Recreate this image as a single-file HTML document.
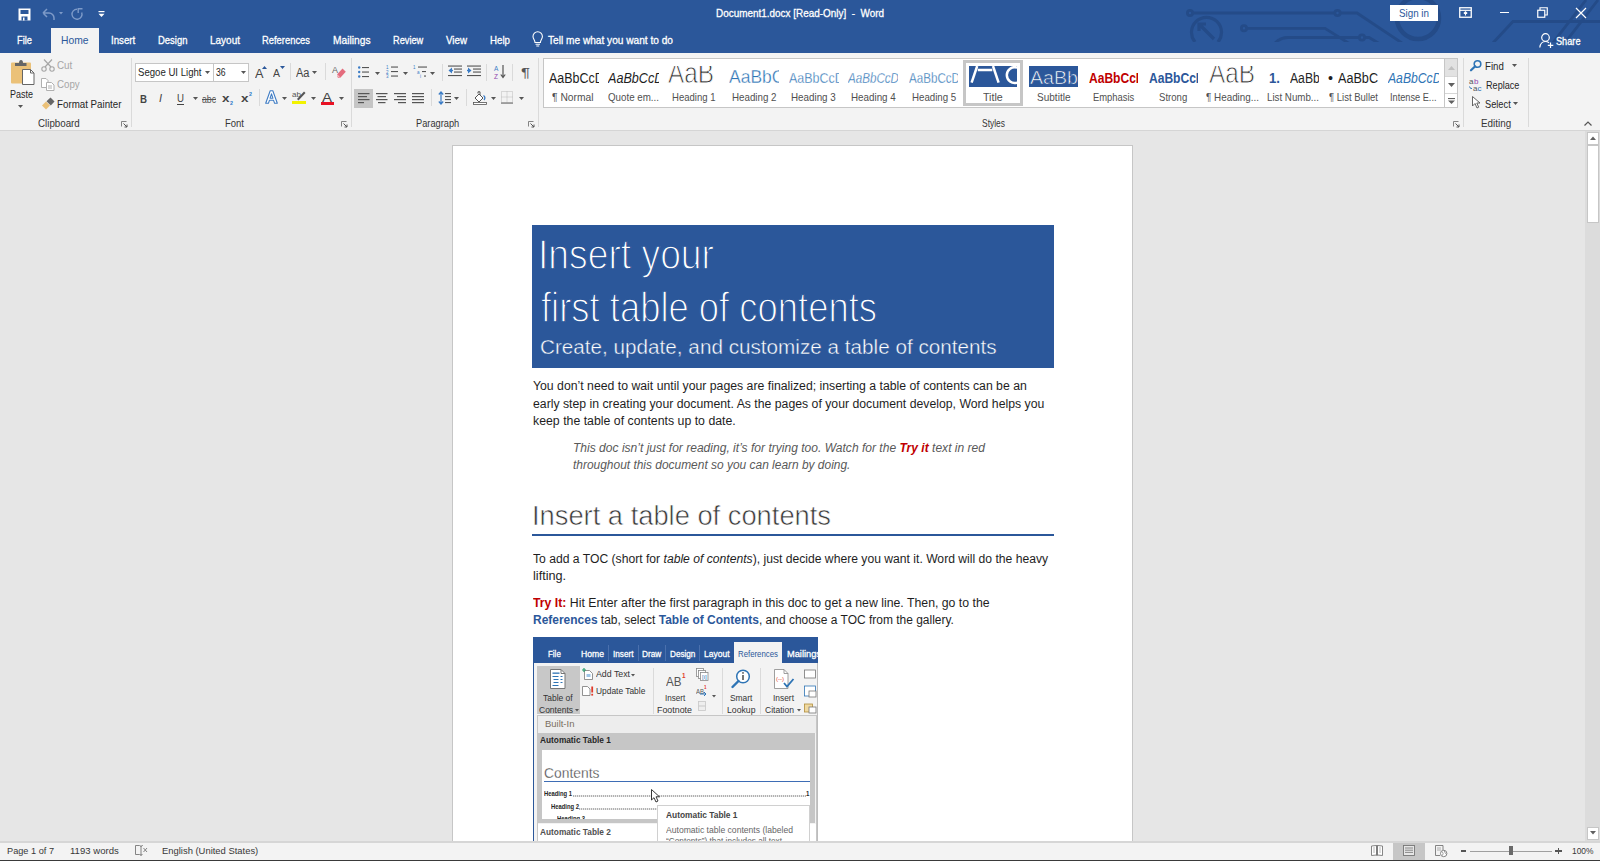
<!DOCTYPE html>
<html><head><meta charset="utf-8"><title>Document1.docx [Read-Only] - Word</title>
<style>
html,body{margin:0;padding:0;}
body{width:1600px;height:861px;overflow:hidden;position:relative;background:#E6E6E6;font-family:"Liberation Sans",sans-serif;}
.a{position:absolute;}
.t{position:absolute;white-space:nowrap;transform-origin:0 0;}
svg.a{overflow:visible;}
</style></head><body>
<div class="a" style="left:0px;top:0px;width:1600px;height:53px;background:#2B579A;"></div>
<svg class="a" style="left:0px;top:0px;" width="1600" height="53" viewBox="0 0 1600 53">
<defs><clipPath id="dc"><rect x="0" y="0" width="1600" height="42"></rect></clipPath></defs>
<g clip-path="url(#dc)" fill="none" stroke="#244B88" stroke-width="2.8">
<circle cx="1190" cy="13" r="2.6"></circle>
<path d="M1193 13 H1335 M1340 13 H1357 L1405 45"></path>
<circle cx="1337.5" cy="13" r="2.6"></circle>
<circle cx="1244" cy="28.3" r="2.6"></circle>
<path d="M1247 28.3 H1325 L1350 44"></path>
<path d="M1274 44 Q1280 37.5 1288 37.5 H1359 M1365 37.5 H1369 L1380 44"></path>
<circle cx="1362" cy="37.5" r="2.6"></circle>
<path d="M1195 42 A15 15 0 1 1 1218 42" stroke-width="3.2"></path>
<path d="M1214 39 L1200 25 M1199 31 V24 H1206" stroke-width="3.2"></path>
<circle cx="1418" cy="18" r="21" stroke-width="4.5"></circle>
<path d="M1492 44 L1513 21.5 H1600"></path>
<path d="M1552 44 L1586 0 M1564 44 L1598 0"></path>
</g></svg>
<svg class="a" style="left:18px;top:8px;" width="13" height="13" viewBox="0 0 13 13"><path d="M0.5 0.5 H12.5 V12.5 H0.5 Z" fill="#fff"></path>
<rect x="2.5" y="2" width="8" height="4" fill="#2B579A"></rect>
<rect x="3.5" y="8.5" width="6" height="4" fill="#2B579A"></rect>
<rect x="5" y="9.5" width="1.5" height="3" fill="#fff"></rect></svg>
<svg class="a" style="left:41px;top:7px;" width="24" height="14" viewBox="0 0 24 14"><path d="M2 6 L6 2 M2 6 L6 10 M2 6 H8 A5 5 0 0 1 13 11 V13" fill="none" stroke="#7D9AC8" stroke-width="1.5"></path>
<path d="M18 5 L22 5 L20 7.5 Z" fill="#7D9AC8"></path></svg>
<svg class="a" style="left:71px;top:7px;" width="13" height="13" viewBox="0 0 13 13"><path d="M6 2.2 A5 5 0 1 0 10.7 5.5" fill="none" stroke="#7D9AC8" stroke-width="1.4"></path><path d="M7.2 6 V1.8 H11.5" fill="none" stroke="#7D9AC8" stroke-width="1.4"></path></svg>
<svg class="a" style="left:98px;top:11px;" width="7" height="7" viewBox="0 0 7 7"><rect x="0.5" y="0" width="6" height="1.2" fill="#fff"></rect><path d="M0.5 2.8 H6.5 L3.5 6 Z" fill="#fff"></path></svg>
<div class="t" style="left: 716px; top: 8.45px; font-size: 11px; line-height: 11px; color: rgb(255, 255, 255); -webkit-text-stroke: 0.3px rgb(255, 255, 255); transform: scaleX(0.901938);">Document1.docx [Read-Only]&nbsp;&nbsp;-&nbsp;&nbsp;Word</div>
<div class="a" style="left:1390px;top:5px;width:48px;height:16px;background:#FFFFFF;"></div>
<div class="t" style="left: 1399px; top: 8.45px; font-size: 11px; line-height: 11px; color: rgb(43, 87, 154); transform: scaleX(0.891779);">Sign in</div>
<svg class="a" style="left:1459px;top:7px;" width="14" height="12" viewBox="0 0 14 12"><rect x="0.75" y="0.75" width="11.5" height="9.5" fill="none" stroke="#fff" stroke-width="1.3"></rect><path d="M1 3.3 H12" stroke="#fff" stroke-width="1.2"></path><path d="M6.5 8.5 V5 M4.8 6.5 L6.5 4.8 L8.2 6.5" fill="none" stroke="#fff" stroke-width="1.1"></path></svg>
<div class="a" style="left:1500px;top:12px;width:9px;height:1.3px;background:#FFFFFF;"></div>
<svg class="a" style="left:1537px;top:7px;" width="12" height="12" viewBox="0 0 12 12"><rect x="0.75" y="3.25" width="7" height="7" fill="none" stroke="#fff" stroke-width="1.2"></rect><path d="M3 3 V0.75 H10.25 V8 H8" fill="none" stroke="#fff" stroke-width="1.2"></path></svg>
<svg class="a" style="left:1575px;top:7px;" width="12" height="12" viewBox="0 0 12 12"><path d="M1 1 L11 11 M11 1 L1 11" stroke="#fff" stroke-width="1.2"></path></svg>
<div class="a" style="left:51px;top:28px;width:48px;height:26px;background:#F3F3F3;"></div>
<div class="t" style="left: 17px; top: 35.25px; font-size: 11px; line-height: 11px; color: rgb(255, 255, 255); -webkit-text-stroke: 0.3px rgb(255, 255, 255); transform: scaleX(0.845815);">File</div>
<div class="t" style="left: 110.7px; top: 35.25px; font-size: 11px; line-height: 11px; color: rgb(255, 255, 255); -webkit-text-stroke: 0.3px rgb(255, 255, 255); transform: scaleX(0.883135);">Insert</div>
<div class="t" style="left: 157.6px; top: 35.25px; font-size: 11px; line-height: 11px; color: rgb(255, 255, 255); -webkit-text-stroke: 0.3px rgb(255, 255, 255); transform: scaleX(0.858394);">Design</div>
<div class="t" style="left: 210px; top: 35.25px; font-size: 11px; line-height: 11px; color: rgb(255, 255, 255); -webkit-text-stroke: 0.3px rgb(255, 255, 255); transform: scaleX(0.908231);">Layout</div>
<div class="t" style="left: 262px; top: 35.25px; font-size: 11px; line-height: 11px; color: rgb(255, 255, 255); -webkit-text-stroke: 0.3px rgb(255, 255, 255); transform: scaleX(0.853096);">References</div>
<div class="t" style="left: 332.5px; top: 35.25px; font-size: 11px; line-height: 11px; color: rgb(255, 255, 255); -webkit-text-stroke: 0.3px rgb(255, 255, 255); transform: scaleX(0.929152);">Mailings</div>
<div class="t" style="left: 392.75px; top: 35.25px; font-size: 11px; line-height: 11px; color: rgb(255, 255, 255); -webkit-text-stroke: 0.3px rgb(255, 255, 255); transform: scaleX(0.838458);">Review</div>
<div class="t" style="left: 445.6px; top: 35.25px; font-size: 11px; line-height: 11px; color: rgb(255, 255, 255); -webkit-text-stroke: 0.3px rgb(255, 255, 255); transform: scaleX(0.887715);">View</div>
<div class="t" style="left: 489.7px; top: 35.25px; font-size: 11px; line-height: 11px; color: rgb(255, 255, 255); -webkit-text-stroke: 0.3px rgb(255, 255, 255); transform: scaleX(0.883978);">Help</div>
<div class="t" style="left: 547.8px; top: 35.25px; font-size: 11px; line-height: 11px; color: rgb(255, 255, 255); -webkit-text-stroke: 0.3px rgb(255, 255, 255); transform: scaleX(0.92081);">Tell me what you want to do</div>
<div class="t" style="left: 61px; top: 35.25px; font-size: 11px; line-height: 11px; color: rgb(43, 87, 154); transform: scaleX(0.937167);">Home</div>
<svg class="a" style="left:532px;top:32px;" width="12" height="15" viewBox="0 0 12 15"><path d="M3 10.5 C3 8 1 7 1 4.5 A4.7 4.7 0 0 1 10.4 4.5 C10.4 7 8.4 8 8.4 10.5 Z" fill="none" stroke="#fff" stroke-width="1.1"></path><path d="M3.5 12.3 H8 M4.3 14 H7.2" stroke="#fff" stroke-width="1.1"></path></svg>
<svg class="a" style="left:1539px;top:33px;" width="15" height="15" viewBox="0 0 15 15"><circle cx="6.5" cy="4.5" r="3.8" fill="none" stroke="#fff" stroke-width="1.2"></circle><path d="M0.8 14.5 C1.3 10.5 3.5 8.5 6.5 8.5 C8 8.5 9 9 10 9.8" fill="none" stroke="#fff" stroke-width="1.2"></path><path d="M11.5 9.5 V15 M8.8 12.3 H14.3" stroke="#fff" stroke-width="1.2"></path></svg>
<div class="t" style="left: 1556px; top: 36.45px; font-size: 11px; line-height: 11px; color: rgb(255, 255, 255); -webkit-text-stroke: 0.3px rgb(255, 255, 255); transform: scaleX(0.834486);">Share</div>
<div class="a" style="left:0px;top:53px;width:1600px;height:78px;background:#F3F3F3;"></div>
<div class="a" style="left:0px;top:130px;width:1600px;height:1px;background:#D5D5D5;"></div>
<div class="a" style="left:131px;top:58px;width:1px;height:69px;background:#DADADA;"></div>
<div class="a" style="left:350.5px;top:58px;width:1px;height:69px;background:#DADADA;"></div>
<div class="a" style="left:537.5px;top:58px;width:1px;height:69px;background:#DADADA;"></div>
<div class="a" style="left:1463px;top:58px;width:1px;height:69px;background:#DADADA;"></div>
<div class="a" style="left:1528px;top:58px;width:1px;height:69px;background:#DADADA;"></div>
<svg class="a" style="left:10px;top:59px;" width="26" height="28" viewBox="0 0 26 28">
<rect x="1" y="3.5" width="20" height="21" rx="1" fill="#EBC178"></rect>
<path d="M5 7 V4 H9 Q9 1 11 1 Q13 1 13 4 H16.5 V7 Z" fill="#666"></path>
<path d="M12.5 10.5 H20.5 L24 14 V25.5 H12.5 Z" fill="#fff" stroke="#666" stroke-width="1"></path>
<path d="M20.5 10.5 V14 H24" fill="none" stroke="#666" stroke-width="1"></path></svg>
<div class="t" style="left: 9.6px; top: 89.15px; font-size: 11px; line-height: 11px; color: rgb(38, 38, 38); transform: scaleX(0.817324);">Paste</div>
<svg class="a" style="left:18px;top:105px;" width="5" height="4" viewBox="0 0 5 4"><path d="M0 0 H5 L2.5 3 Z" fill="#555"></path></svg>
<svg class="a" style="left:41px;top:59px;" width="14" height="13" viewBox="0 0 14 13"><path d="M3 0.5 L10 8 M11 0.5 L4 8" stroke="#A6A6A6" stroke-width="1.2" fill="none"></path>
<circle cx="3" cy="10" r="2.2" fill="none" stroke="#A6A6A6" stroke-width="1.1"></circle><circle cx="11" cy="10" r="2.2" fill="none" stroke="#A6A6A6" stroke-width="1.1"></circle></svg>
<div class="t" style="left: 57px; top: 60.45px; font-size: 11px; line-height: 11px; color: rgb(166, 166, 166); transform: scaleX(0.893431);">Cut</div>
<svg class="a" style="left:41px;top:78px;" width="14" height="13" viewBox="0 0 14 13"><path d="M0.5 0.5 H5 L7 2.5 V9.5 H0.5 Z" fill="#fff" stroke="#B0B0B0"></path>
<path d="M5.5 4.5 H10.5 L13 7 V12.5 H5.5 Z" fill="#fff" stroke="#B0B0B0"></path>
<path d="M7 8 H11 M7 10 H11" stroke="#B0B0B0"></path></svg>
<div class="t" style="left: 57px; top: 79.45px; font-size: 11px; line-height: 11px; color: rgb(166, 166, 166); transform: scaleX(0.883698);">Copy</div>
<svg class="a" style="left:41px;top:97px;" width="14" height="13" viewBox="0 0 14 13"><path d="M1 8.5 L5 4.5 L9 8.5 L5 12.5 Z" fill="#EBC178"></path>
<path d="M5.5 4.2 L9.5 0.5 L13.5 4.5 L9.8 8.5 Z" fill="#666"></path></svg>
<div class="t" style="left: 57px; top: 99.15px; font-size: 11px; line-height: 11px; color: rgb(38, 38, 38); transform: scaleX(0.886598);">Format Painter</div>
<div class="t" style="left: 37.9px; top: 118.45px; font-size: 11px; line-height: 11px; color: rgb(54, 54, 54); transform: scaleX(0.887591);">Clipboard</div>
<svg class="a" style="left:121px;top:121px;" width="7" height="6" viewBox="0 0 7 6"><path d="M0.5 5.5 V0.5 H5.5" fill="none" stroke="#777" stroke-width="0.9"></path><path d="M2.5 2.5 L6 6 M6 3.5 V6 H3.5" fill="none" stroke="#555" stroke-width="1"></path></svg>
<svg class="a" style="left:340.5px;top:121px;" width="7" height="6" viewBox="0 0 7 6"><path d="M0.5 5.5 V0.5 H5.5" fill="none" stroke="#777" stroke-width="0.9"></path><path d="M2.5 2.5 L6 6 M6 3.5 V6 H3.5" fill="none" stroke="#555" stroke-width="1"></path></svg>
<svg class="a" style="left:527.5px;top:121px;" width="7" height="6" viewBox="0 0 7 6"><path d="M0.5 5.5 V0.5 H5.5" fill="none" stroke="#777" stroke-width="0.9"></path><path d="M2.5 2.5 L6 6 M6 3.5 V6 H3.5" fill="none" stroke="#555" stroke-width="1"></path></svg>
<svg class="a" style="left:1452.5px;top:121px;" width="7" height="6" viewBox="0 0 7 6"><path d="M0.5 5.5 V0.5 H5.5" fill="none" stroke="#777" stroke-width="0.9"></path><path d="M2.5 2.5 L6 6 M6 3.5 V6 H3.5" fill="none" stroke="#555" stroke-width="1"></path></svg>
<div class="a" style="left:135px;top:62.5px;width:114px;height:19px;background:#FFFFFF;border:1px solid #C6C6C6;box-sizing:border-box;"></div>
<div class="a" style="left:213px;top:63px;width:1px;height:18px;background:#C6C6C6;"></div>
<div class="t" style="left: 137.5px; top: 67.32px; font-size: 11.5px; line-height: 11.5px; color: rgb(38, 38, 38); transform: scaleX(0.834497);">Segoe UI Light</div>
<svg class="a" style="left:204.5px;top:71px;" width="5" height="3" viewBox="0 0 5 3"><path d="M0 0 H5 L2.5 3 Z" fill="#555"></path></svg>
<div class="t" style="left: 216px; top: 67.32px; font-size: 11.5px; line-height: 11.5px; color: rgb(38, 38, 38); transform: scaleX(0.750183);">36</div>
<svg class="a" style="left:240.5px;top:71px;" width="5" height="3" viewBox="0 0 5 3"><path d="M0 0 H5 L2.5 3 Z" fill="#555"></path></svg>
<div class="t" style="left: 254.5px; top: 66.75px; font-size: 13px; line-height: 13px; color: rgb(68, 68, 68); transform: scaleX(0.98018);">A</div>
<svg class="a" style="left:262px;top:66px;" width="5" height="3" viewBox="0 0 5 3"><path d="M0 3 H5 L2.5 0 Z" fill="#2B579A"></path></svg>
<div class="t" style="left: 273px; top: 69.3px; font-size: 10px; line-height: 10px; color: rgb(68, 68, 68); transform: scaleX(1.04918);">A</div>
<svg class="a" style="left:280px;top:66px;" width="5" height="3" viewBox="0 0 5 3"><path d="M0 0 H5 L2.5 3 Z" fill="#2B579A"></path></svg>
<div class="a" style="left:289.5px;top:63px;width:1px;height:17px;background:#DADADA;"></div>
<div class="t" style="left: 295.7px; top: 66.6px; font-size: 12px; line-height: 12px; color: rgb(68, 68, 68); transform: scaleX(0.919149);">Aa</div>
<svg class="a" style="left:312px;top:71px;" width="5" height="3" viewBox="0 0 5 3"><path d="M0 0 H5 L2.5 3 Z" fill="#555"></path></svg>
<div class="a" style="left:324.5px;top:63px;width:1px;height:17px;background:#DADADA;"></div>
<svg class="a" style="left:332px;top:65px;" width="14" height="13" viewBox="0 0 14 13"><text x="0" y="8" font-size="9" font-family="Liberation Sans" fill="#666">A</text>
<path d="M5 9.5 L10.5 3.5 L13.8 6.8 L8.3 12.8 H5.8 Z" fill="#E46C7D"></path><path d="M5 9.5 L7.5 12.3" stroke="#fff" stroke-width="0.7"></path></svg>
<div class="t" style="left: 140px; top: 93.88px; font-size: 10.5px; line-height: 10.5px; color: rgb(68, 68, 68); font-weight: bold; transform: scaleX(0.921811);">B</div>
<div class="t" style="left:159.00px;top:93.45px;font-size:11px;line-height:11px;color:#444;font-style:italic;font-family:" liberation="" serif",serif;--w:6;"="">I</div>
<div class="t" style="left: 176.5px; top: 93.45px; font-size: 11px; line-height: 11px; color: rgb(68, 68, 68); transform: scaleX(0.880157);">U</div>
<div class="a" style="left:176.5px;top:103.5px;width:7.5px;height:1px;background:#444;"></div>
<svg class="a" style="left:192.5px;top:97px;" width="5" height="3" viewBox="0 0 5 3"><path d="M0 0 H5 L2.5 3 Z" fill="#555"></path></svg>
<div class="t" style="left: 202px; top: 93.88px; font-size: 10.5px; line-height: 10.5px; color: rgb(85, 85, 85); transform: scaleX(0.826568);">abc</div>
<div class="a" style="left:202px;top:98.5px;width:14px;height:1px;background:#555;"></div>
<div class="t" style="left: 222px; top: 93.45px; font-size: 11px; line-height: 11px; color: rgb(68, 68, 68); font-weight: bold; transform: scaleX(1.22449);">x</div>
<div class="t" style="left: 230px; top: 100.2px; font-size: 6px; line-height: 6px; color: rgb(43, 121, 201); font-weight: bold; transform: scaleX(0.897196);">2</div>
<div class="t" style="left: 240.7px; top: 93.45px; font-size: 11px; line-height: 11px; color: rgb(68, 68, 68); font-weight: bold; transform: scaleX(1.22449);">x</div>
<div class="t" style="left: 248.5px; top: 91.2px; font-size: 6px; line-height: 6px; color: rgb(43, 121, 201); font-weight: bold; transform: scaleX(0.897196);">2</div>
<div class="a" style="left:258.5px;top:89px;width:1px;height:17px;background:#DADADA;"></div>
<svg class="a" style="left:265px;top:90px;" width="13" height="14" viewBox="0 0 13 14"><path d="M0.7 13.3 L5.2 0.7 H7.8 L12.3 13.3 H9.6 L8.6 10.3 H4.4 L3.4 13.3 Z M5.1 8.2 H7.9 L6.5 3.8 Z" fill="#fff" stroke="#3F7CC4" stroke-width="1.1" stroke-linejoin="round"></path></svg>
<svg class="a" style="left:282px;top:97px;" width="5" height="3" viewBox="0 0 5 3"><path d="M0 0 H5 L2.5 3 Z" fill="#555"></path></svg>
<svg class="a" style="left:292px;top:89px;" width="15" height="15" viewBox="0 0 15 15"><text x="0" y="8" font-size="8" font-family="Liberation Sans" fill="#555">ab</text>
<path d="M5 10 L12 2.5 L13.5 4 L6.5 11.5 Z" fill="#555"></path>
<rect x="0" y="12" width="14" height="3" fill="#F2F200"></rect></svg>
<svg class="a" style="left:311px;top:97px;" width="5" height="3" viewBox="0 0 5 3"><path d="M0 0 H5 L2.5 3 Z" fill="#555"></path></svg>
<div class="t" style="left: 322px; top: 91.6px; font-size: 12px; line-height: 12px; color: rgb(68, 68, 68); transform: scaleX(1.24756);">A</div>
<div class="a" style="left:321px;top:101.5px;width:13px;height:3px;background:#E81123;"></div>
<svg class="a" style="left:339px;top:97px;" width="5" height="3" viewBox="0 0 5 3"><path d="M0 0 H5 L2.5 3 Z" fill="#555"></path></svg>
<div class="t" style="left: 225px; top: 118.45px; font-size: 11px; line-height: 11px; color: rgb(54, 54, 54); transform: scaleX(0.863023);">Font</div>
<svg class="a" style="left:357.5px;top:65.5px;" width="11" height="12" viewBox="0 0 11 12"><circle cx="1.2" cy="1.5" r="1.2" fill="#3B7CC6"></circle><circle cx="1.2" cy="6" r="1.2" fill="#3B7CC6"></circle><circle cx="1.2" cy="10.5" r="1.2" fill="#3B7CC6"></circle><rect x="4" y="1" width="7" height="1.1" fill="#555"></rect><rect x="4" y="5.5" width="7" height="1.1" fill="#555"></rect><rect x="4" y="10" width="7" height="1.1" fill="#555"></rect></svg>
<svg class="a" style="left:375px;top:72px;" width="5" height="3" viewBox="0 0 5 3"><path d="M0 0 H5 L2.5 3 Z" fill="#555"></path></svg>
<svg class="a" style="left:385.5px;top:65px;" width="12" height="13" viewBox="0 0 12 13"><text x="0" y="4" font-size="4.5" fill="#3B7CC6" font-family="Liberation Sans">1</text><text x="0" y="8.5" font-size="4.5" fill="#3B7CC6" font-family="Liberation Sans">2</text><text x="0" y="13" font-size="4.5" fill="#3B7CC6" font-family="Liberation Sans">3</text><rect x="5" y="1.5" width="7" height="1.1" fill="#555"></rect><rect x="5" y="6" width="7" height="1.1" fill="#555"></rect><rect x="5" y="10.5" width="7" height="1.1" fill="#555"></rect></svg>
<svg class="a" style="left:403px;top:72px;" width="5" height="3" viewBox="0 0 5 3"><path d="M0 0 H5 L2.5 3 Z" fill="#555"></path></svg>
<svg class="a" style="left:413px;top:65px;" width="14" height="13" viewBox="0 0 14 13"><text x="0" y="4" font-size="4.5" fill="#3B7CC6" font-family="Liberation Sans">1</text><text x="4" y="8.5" font-size="4.5" fill="#3B7CC6" font-family="Liberation Sans">a</text><text x="7" y="13" font-size="4.5" fill="#3B7CC6" font-family="Liberation Sans">i</text><rect x="5" y="1.5" width="9" height="1.1" fill="#555"></rect><rect x="9" y="6" width="4" height="1.1" fill="#555"></rect><rect x="11" y="10.5" width="2" height="1.1" fill="#555"></rect></svg>
<svg class="a" style="left:430px;top:72px;" width="5" height="3" viewBox="0 0 5 3"><path d="M0 0 H5 L2.5 3 Z" fill="#555"></path></svg>
<div class="a" style="left:442px;top:64px;width:1px;height:17px;background:#DADADA;"></div>
<svg class="a" style="left:448px;top:65px;" width="14" height="12" viewBox="0 0 14 12"><rect x="0" y="0.5" width="14" height="1.1" fill="#555"></rect><rect x="6" y="3.5" width="8" height="1.1" fill="#555"></rect><rect x="6" y="6.5" width="8" height="1.1" fill="#555"></rect><rect x="0" y="10" width="14" height="1.1" fill="#555"></rect><path d="M0.5 5.5 L4 2.5 V8.5 Z" fill="#3B7CC6"></path><rect x="2" y="4.8" width="3" height="1.4" fill="#3B7CC6"></rect></svg>
<svg class="a" style="left:467px;top:65px;" width="14" height="12" viewBox="0 0 14 12"><rect x="0" y="0.5" width="14" height="1.1" fill="#555"></rect><rect x="6" y="3.5" width="8" height="1.1" fill="#555"></rect><rect x="6" y="6.5" width="8" height="1.1" fill="#555"></rect><rect x="0" y="10" width="14" height="1.1" fill="#555"></rect><path d="M4.5 5.5 L1 2.5 V8.5 Z" fill="#3B7CC6"></path><rect x="0" y="4.8" width="3" height="1.4" fill="#3B7CC6"></rect></svg>
<div class="a" style="left:486px;top:64px;width:1px;height:17px;background:#DADADA;"></div>
<svg class="a" style="left:494px;top:65px;" width="12" height="14" viewBox="0 0 12 14"><text x="0" y="6" font-size="6.5" fill="#3B7CC6" font-family="Liberation Sans">A</text><text x="0" y="13.5" font-size="6.5" fill="#8E44AD" font-family="Liberation Sans">Z</text><path d="M9 0 V12 M6.8 9.5 L9 12.5 L11.2 9.5" fill="none" stroke="#555" stroke-width="1.2"></path></svg>
<div class="a" style="left:512px;top:64px;width:1px;height:17px;background:#DADADA;"></div>
<div class="t" style="left: 520.6px; top: 67.17px; font-size: 12.5px; line-height: 12.5px; color: rgb(85, 85, 85); transform: scaleX(1.33953);">¶</div>
<div class="a" style="left:354px;top:88.5px;width:18.5px;height:19px;background:#C5C5C5;"></div>
<svg class="a" style="left:357.5px;top:93px;" width="12" height="10" viewBox="0 0 12 10"><rect x="0" y="0" width="11.5" height="1.2" fill="#555"></rect><rect x="0" y="3" width="9" height="1.2" fill="#555"></rect><rect x="0" y="6" width="11.5" height="1.2" fill="#555"></rect><rect x="0" y="9" width="6" height="1.2" fill="#555"></rect></svg>
<svg class="a" style="left:375.5px;top:93px;" width="12" height="10" viewBox="0 0 12 10"><rect x="0" y="0" width="11.5" height="1.2" fill="#555"></rect><rect x="1.5" y="3" width="8.5" height="1.2" fill="#555"></rect><rect x="0" y="6" width="11.5" height="1.2" fill="#555"></rect><rect x="2" y="9" width="7.5" height="1.2" fill="#555"></rect></svg>
<svg class="a" style="left:394px;top:93px;" width="12" height="10" viewBox="0 0 12 10"><rect x="0" y="0" width="12" height="1.2" fill="#555"></rect><rect x="3" y="3" width="9" height="1.2" fill="#555"></rect><rect x="0" y="6" width="12" height="1.2" fill="#555"></rect><rect x="4" y="9" width="8" height="1.2" fill="#555"></rect></svg>
<svg class="a" style="left:412px;top:93px;" width="12" height="10" viewBox="0 0 12 10"><rect x="0" y="0" width="12" height="1.2" fill="#555"></rect><rect x="0" y="3" width="12" height="1.2" fill="#555"></rect><rect x="0" y="6" width="12" height="1.2" fill="#555"></rect><rect x="0" y="9" width="12" height="1.2" fill="#555"></rect></svg>
<div class="a" style="left:431px;top:89px;width:1px;height:17px;background:#DADADA;"></div>
<svg class="a" style="left:437.5px;top:90.5px;" width="13" height="14" viewBox="0 0 13 14"><path d="M3 1 V13 M0.8 3.5 L3 1 L5.2 3.5 M0.8 10.5 L3 13 L5.2 10.5" fill="none" stroke="#3B7CC6" stroke-width="1.2"></path><rect x="7" y="2" width="6" height="1.1" fill="#555"></rect><rect x="7" y="5" width="6" height="1.1" fill="#555"></rect><rect x="7" y="8" width="6" height="1.1" fill="#555"></rect><rect x="7" y="11" width="6" height="1.1" fill="#555"></rect></svg>
<svg class="a" style="left:454px;top:97px;" width="5" height="3" viewBox="0 0 5 3"><path d="M0 0 H5 L2.5 3 Z" fill="#555"></path></svg>
<div class="a" style="left:466px;top:89px;width:1px;height:17px;background:#DADADA;"></div>
<svg class="a" style="left:472.5px;top:90.5px;" width="14" height="14" viewBox="0 0 14 14"><path d="M2 7 L6 3 L10 7 L6 11 Z" fill="#fff" stroke="#555" stroke-width="1"></path><path d="M5 2.5 V0.8 H7 V4" fill="none" stroke="#555"></path><path d="M10.5 4.5 Q13 6.5 11 9" fill="none" stroke="#3B7CC6" stroke-width="1.3"></path><rect x="0.5" y="11.5" width="13" height="2" fill="#fff" stroke="#555" stroke-width="0.8"></rect></svg>
<svg class="a" style="left:490.5px;top:97px;" width="5" height="3" viewBox="0 0 5 3"><path d="M0 0 H5 L2.5 3 Z" fill="#555"></path></svg>
<svg class="a" style="left:501px;top:90.5px;" width="12" height="13" viewBox="0 0 12 13"><rect x="0.5" y="0.5" width="11" height="11" fill="none" stroke="#BBB" stroke-dasharray="1 1"></rect><path d="M6 0.5 V11.5 M0.5 6 H11.5" stroke="#BBB" stroke-dasharray="1 1"></path><rect x="0" y="11.5" width="12" height="1.2" fill="#777"></rect></svg>
<svg class="a" style="left:519px;top:97px;" width="5" height="3" viewBox="0 0 5 3"><path d="M0 0 H5 L2.5 3 Z" fill="#555"></path></svg>
<div class="t" style="left: 415.6px; top: 118.45px; font-size: 11px; line-height: 11px; color: rgb(54, 54, 54); transform: scaleX(0.840876);">Paragraph</div>
<div class="a" style="left:542.5px;top:58.3px;width:915px;height:50px;background:#FFFFFF;border:1px solid #C6C6C6;box-sizing:border-box;"></div>
<div class="a" style="left:1444px;top:59px;width:1px;height:49px;background:#C6C6C6;"></div>
<div class="a" style="left:1445px;top:59.3px;width:12px;height:16.7px;background:#E2E2E2;"></div>
<div class="a" style="left:1445px;top:76px;width:12px;height:1px;background:#D6D6D6;"></div>
<div class="a" style="left:1445px;top:92.75px;width:12px;height:1px;background:#D6D6D6;"></div>
<svg class="a" style="left:1447.5px;top:66px;" width="7" height="4" viewBox="0 0 7 4"><path d="M0 4 H7 L3.5 0 Z" fill="#C0C0C0"></path></svg>
<svg class="a" style="left:1447.5px;top:83px;" width="7" height="4" viewBox="0 0 7 4"><path d="M0 0 H7 L3.5 4 Z" fill="#606060"></path></svg>
<svg class="a" style="left:1447.5px;top:97.5px;" width="7" height="6" viewBox="0 0 7 6"><rect x="0" y="0" width="7" height="1.1" fill="#606060"></rect><path d="M0 2.5 H7 L3.5 6 Z" fill="#606060"></path></svg>
<div class="a" style="left:963.3px;top:60.25px;width:59.7px;height:45.75px;border:3px solid #C6C6C6;box-sizing:border-box;"></div>
<div class="t" style="left: 552px; top: 92.32px; font-size: 10.8px; line-height: 10.8px; color: rgb(80, 80, 80); transform: scaleX(0.951971);">¶ Normal</div>
<div class="t" style="left: 608px; top: 92.32px; font-size: 10.8px; line-height: 10.8px; color: rgb(80, 80, 80); transform: scaleX(0.903905);">Quote em...</div>
<div class="t" style="left: 671.5px; top: 92.32px; font-size: 10.8px; line-height: 10.8px; color: rgb(80, 80, 80); transform: scaleX(0.883529);">Heading 1</div>
<div class="t" style="left: 731.5px; top: 92.32px; font-size: 10.8px; line-height: 10.8px; color: rgb(80, 80, 80); transform: scaleX(0.90384);">Heading 2</div>
<div class="t" style="left: 791px; top: 92.32px; font-size: 10.8px; line-height: 10.8px; color: rgb(80, 80, 80); transform: scaleX(0.908918);">Heading 3</div>
<div class="t" style="left: 851px; top: 92.32px; font-size: 10.8px; line-height: 10.8px; color: rgb(80, 80, 80); transform: scaleX(0.908918);">Heading 4</div>
<div class="t" style="left: 911.5px; top: 92.32px; font-size: 10.8px; line-height: 10.8px; color: rgb(80, 80, 80); transform: scaleX(0.898762);">Heading 5</div>
<div class="t" style="left: 983px; top: 92.32px; font-size: 10.8px; line-height: 10.8px; color: rgb(80, 80, 80); transform: scaleX(0.9875);">Title</div>
<div class="t" style="left: 1036.5px; top: 92.32px; font-size: 10.8px; line-height: 10.8px; color: rgb(80, 80, 80); transform: scaleX(0.930152);">Subtitle</div>
<div class="t" style="left: 1092.75px; top: 92.32px; font-size: 10.8px; line-height: 10.8px; color: rgb(80, 80, 80); transform: scaleX(0.870138);">Emphasis</div>
<div class="t" style="left: 1158.75px; top: 92.32px; font-size: 10.8px; line-height: 10.8px; color: rgb(80, 80, 80); transform: scaleX(0.888016);">Strong</div>
<div class="t" style="left: 1206px; top: 92.32px; font-size: 10.8px; line-height: 10.8px; color: rgb(80, 80, 80); transform: scaleX(0.913301);">¶ Heading...</div>
<div class="t" style="left: 1267px; top: 92.32px; font-size: 10.8px; line-height: 10.8px; color: rgb(80, 80, 80); transform: scaleX(0.902631);">List Numb...</div>
<div class="t" style="left: 1329px; top: 92.32px; font-size: 10.8px; line-height: 10.8px; color: rgb(80, 80, 80); transform: scaleX(0.881146);">¶ List Bullet</div>
<div class="t" style="left: 1390px; top: 92.32px; font-size: 10.8px; line-height: 10.8px; color: rgb(80, 80, 80); transform: scaleX(0.851259);">Intense E...</div>
<div class="a" style="left:549px;top:71.40px;width:49.5px;height:18.2px;overflow:hidden;"><div class="t" style="left:0px;top:0px;font-size:14px;line-height:14px;color:#1E1E1E;transform:scaleX(0.89);">AaBbCcD</div></div>
<div class="a" style="left:607.5px;top:71.40px;width:51px;height:18.2px;overflow:hidden;"><div class="t" style="left:0px;top:0px;font-size:14px;line-height:14px;color:#1E1E1E;transform:scaleX(0.9);font-style:italic;">AaBbCcD</div></div>
<div class="a" style="left:667px;top:66px;width:48.5px;height:22px;overflow:hidden;"><div class="t" style="left:1px;top:-7.05px;font-size:29px;line-height:29px;color:#333;transform:scaleX(0.84);-webkit-text-stroke:0.9px #fff;">AaB</div></div>
<div class="a" style="left:729px;top:67.35px;width:49.5px;height:24.7px;overflow:hidden;"><div class="t" style="left:0px;top:0px;font-size:19px;line-height:19px;color:#2E74B5;transform:scaleX(0.92);-webkit-text-stroke:0.35px #fff;">AaBbC</div></div>
<div class="a" style="left:789px;top:70.97px;width:49.5px;height:18.9px;overflow:hidden;"><div class="t" style="left:0px;top:0px;font-size:14.5px;line-height:14.5px;color:#2E74B5;transform:scaleX(0.86);-webkit-text-stroke:0.3px #fff;">AaBbCcD</div></div>
<div class="a" style="left:848px;top:70.97px;width:50px;height:18.9px;overflow:hidden;"><div class="t" style="left:0px;top:0px;font-size:14.5px;line-height:14.5px;color:#2E74B5;transform:scaleX(0.8);font-style:italic;-webkit-text-stroke:0.3px #fff;">AaBbCcD</div></div>
<div class="a" style="left:908.5px;top:70.97px;width:49px;height:18.9px;overflow:hidden;"><div class="t" style="left:0px;top:0px;font-size:14.5px;line-height:14.5px;color:#2E74B5;transform:scaleX(0.8);-webkit-text-stroke:0.3px #fff;">AaBbCcD</div></div>
<div class="a" style="left:969px;top:65.9px;width:48.3px;height:21.6px;background:#2B579A;"></div>
<svg class="a" style="left:969px;top:65.9px;" width="48.3" height="21.6" viewBox="0 0 48.3 21.6"><defs><clipPath id="tc"><rect x="0" y="0" width="48.3" height="21.6"></rect></clipPath></defs><g clip-path="url(#tc)" fill="none" stroke="#fff" stroke-width="2.5"><path d="M2.6 16.6 L8.2 0"></path><path d="M8.8 3.9 H23.3"></path><path d="M24 0 L29.6 16.6"></path><path d="M48.2 1.6 A7.9 7.9 0 1 0 48.2 16.6"></path></g></svg>
<div class="a" style="left:1029px;top:65.8px;width:48.75px;height:21.45px;background:#2B579A;"></div>
<div class="t" style="left: 1029.5px; top: 68.5px; font-size: 18px; line-height: 18px; color: rgb(255, 255, 255); -webkit-text-stroke: 0.6px rgb(43, 87, 154); transform: scaleX(1.08975);">AaBb</div>
<div class="a" style="left:1089px;top:71.40px;width:49px;height:18.2px;overflow:hidden;"><div class="t" style="left:0px;top:0px;font-size:14px;line-height:14px;color:#C00000;transform:scaleX(0.86);font-weight:bold;">AaBbCcD</div></div>
<div class="a" style="left:1149px;top:71.40px;width:49px;height:18.2px;overflow:hidden;"><div class="t" style="left:0px;top:0px;font-size:14px;line-height:14px;color:#2B579A;transform:scaleX(0.86);font-weight:bold;">AaBbCcD</div></div>
<div class="a" style="left:1208px;top:66px;width:48px;height:22px;overflow:hidden;"><div class="t" style="left:1px;top:-7.05px;font-size:29px;line-height:29px;color:#333;transform:scaleX(0.84);-webkit-text-stroke:0.9px #fff;">AaB</div></div>
<div class="t" style="left: 1269px; top: 71.4px; font-size: 14px; line-height: 14px; color: rgb(43, 87, 154); font-weight: bold; transform: scaleX(0.941176);">1.</div>
<div class="a" style="left:1290px;top:71.40px;width:29px;height:18.2px;overflow:hidden;"><div class="t" style="left:0px;top:0px;font-size:14px;line-height:14px;color:#262626;transform:scaleX(0.87);">AaBbC</div></div>
<div class="t" style="left: 1328px; top: 71.4px; font-size: 14px; line-height: 14px; color: rgb(30, 30, 30); transform: scaleX(1.01911);">•</div>
<div class="t" style="left: 1338px; top: 71.4px; font-size: 14px; line-height: 14px; color: rgb(30, 30, 30); transform: scaleX(0.901726);">AaBbC</div>
<div class="a" style="left:1387.5px;top:71.40px;width:51px;height:18.2px;overflow:hidden;"><div class="t" style="left:0px;top:0px;font-size:14px;line-height:14px;color:#2E74B5;transform:scaleX(0.87);font-style:italic;">AaBbCcD</div></div>
<div class="t" style="left: 982px; top: 118.45px; font-size: 11px; line-height: 11px; color: rgb(54, 54, 54); transform: scaleX(0.767466);">Styles</div>
<svg class="a" style="left:1470px;top:60px;" width="12" height="11" viewBox="0 0 12 11"><circle cx="7.5" cy="4" r="3.3" fill="none" stroke="#2E74B5" stroke-width="1.6"></circle><path d="M5.2 6.3 L1 10.3" stroke="#2E74B5" stroke-width="2.2" stroke-linecap="round"></path></svg>
<div class="t" style="left: 1485px; top: 60.85px; font-size: 11px; line-height: 11px; color: rgb(38, 38, 38); transform: scaleX(0.875912);">Find</div>
<svg class="a" style="left:1512px;top:64px;" width="5" height="3" viewBox="0 0 5 3"><path d="M0 0 H5 L2.5 3 Z" fill="#555"></path></svg>
<svg class="a" style="left:1469px;top:77px;" width="14" height="14" viewBox="0 0 14 14"><text x="0" y="7" font-size="8" font-family="Liberation Sans" fill="#555">a</text><text x="5" y="7" font-size="8" font-family="Liberation Sans" fill="#8E44AD">b</text><text x="4" y="13.5" font-size="8" font-family="Liberation Sans" fill="#555">a</text><text x="8.5" y="13.5" font-size="8" font-family="Liberation Sans" fill="#2E74B5">c</text><path d="M0.5 9.5 Q1 12 3 11.5" fill="none" stroke="#2E74B5" stroke-width="1"></path></svg>
<div class="t" style="left: 1485.6px; top: 79.85px; font-size: 11px; line-height: 11px; color: rgb(38, 38, 38); transform: scaleX(0.827565);">Replace</div>
<svg class="a" style="left:1472px;top:96px;" width="9" height="13" viewBox="0 0 9 13"><path d="M0.5 0.5 V10 L3 7.5 L5 12 L6.7 11.2 L4.8 7 H8 Z" fill="#fff" stroke="#555" stroke-width="0.9"></path></svg>
<div class="t" style="left: 1485px; top: 98.95px; font-size: 11px; line-height: 11px; color: rgb(38, 38, 38); transform: scaleX(0.84047);">Select</div>
<svg class="a" style="left:1513px;top:102px;" width="5" height="3" viewBox="0 0 5 3"><path d="M0 0 H5 L2.5 3 Z" fill="#555"></path></svg>
<div class="t" style="left: 1480.5px; top: 118.45px; font-size: 11px; line-height: 11px; color: rgb(54, 54, 54); transform: scaleX(0.897724);">Editing</div>
<svg class="a" style="left:1584px;top:121px;" width="8" height="5" viewBox="0 0 8 5"><path d="M0.5 4.5 L4 1 L7.5 4.5" fill="none" stroke="#555" stroke-width="1.2"></path></svg>
<div class="a" style="left:0px;top:131px;width:1600px;height:711px;background:#E6E6E6;"></div>
<div class="a" style="left:1585px;top:131px;width:15px;height:711px;background:#DCDCDC;"></div>
<div class="a" style="left:1587px;top:132px;width:12px;height:13px;background:#FFFFFF;border:1px solid #C6C6C6;box-sizing:border-box;"></div>
<div class="a" style="left:1587px;top:145px;width:12px;height:78px;background:#FFFFFF;border:1px solid #C6C6C6;box-sizing:border-box;"></div>
<div class="a" style="left:1587px;top:827px;width:12px;height:13px;background:#FFFFFF;border:1px solid #C6C6C6;box-sizing:border-box;"></div>
<svg class="a" style="left:1589px;top:134px;" width="8" height="8" viewBox="0 0 8 8"><path d="M1 6 L4 2.5 L7 6 Z" fill="#606060"></path></svg>
<svg class="a" style="left:1589px;top:829px;" width="8" height="8" viewBox="0 0 8 8"><path d="M1 2 L4 5.5 L7 2 Z" fill="#606060"></path></svg>
<div class="a" style="left:452px;top:145px;width:681px;height:700px;background:#FFFFFF;border:1px solid #C6C6C6;box-sizing:border-box;"></div>
<div class="a" style="left:532px;top:225px;width:522px;height:143px;background:#2B579A;"></div>
<div class="t" style="left: 538.4px; top: 234.1px; font-size: 42px; line-height: 42px; color: rgb(255, 255, 255); -webkit-text-stroke: 1.3px rgb(43, 87, 154); transform: scaleX(0.886999);">Insert your</div>
<div class="t" style="left: 541px; top: 287.1px; font-size: 42px; line-height: 42px; color: rgb(255, 255, 255); -webkit-text-stroke: 1.3px rgb(43, 87, 154); transform: scaleX(0.866992);">first table of contents</div>
<div class="t" style="left: 540.4px; top: 337.2px; font-size: 20px; line-height: 20px; color: rgb(255, 255, 255); -webkit-text-stroke: 0.4px rgb(43, 87, 154); transform: scaleX(1.03446);">Create, update, and customize a table of contents</div>
<div class="t" style="left: 532.7px; top: 380.28px; font-size: 12.5px; line-height: 12.5px; color: rgb(30, 30, 30); transform: scaleX(0.981009);">You don’t need to wait until your pages are finalized; inserting a table of contents can be an</div>
<div class="t" style="left: 532.7px; top: 397.68px; font-size: 12.5px; line-height: 12.5px; color: rgb(30, 30, 30); transform: scaleX(0.980235);">early step in creating your document. As the pages of your document develop, Word helps you</div>
<div class="t" style="left: 532.7px; top: 414.98px; font-size: 12.5px; line-height: 12.5px; color: rgb(30, 30, 30); transform: scaleX(0.985812);">keep the table of contents up to date.</div>
<div class="t" style="left: 573px; top: 441.68px; font-size: 12.5px; line-height: 12.5px; color: rgb(89, 89, 89); font-style: italic; transform: scaleX(0.964201);">This doc isn’t just for reading, it’s for trying too. Watch for the <b style="color:#C00000">Try it</b> text in red</div>
<div class="t" style="left: 573px; top: 459.38px; font-size: 12.5px; line-height: 12.5px; color: rgb(89, 89, 89); font-style: italic; transform: scaleX(0.955008);">throughout this document so you can learn by doing.</div>
<div class="t" style="left: 531.8px; top: 501.93px; font-size: 27.5px; line-height: 27.5px; color: rgb(58, 58, 58); -webkit-text-stroke: 0.6px rgb(255, 255, 255); transform: scaleX(0.992789);">Insert a table of contents</div>
<div class="a" style="left:531.5px;top:533.5px;width:522.5px;height:2.6px;background:#2B579A;"></div>
<div class="t" style="left: 532.7px; top: 553.07px; font-size: 12.5px; line-height: 12.5px; color: rgb(30, 30, 30); transform: scaleX(0.9716);">To add a TOC (short for <i>table of contents</i>), just decide where you want it. Word will do the heavy</div>
<div class="t" style="left: 532.7px; top: 570.17px; font-size: 12.5px; line-height: 12.5px; color: rgb(30, 30, 30); transform: scaleX(1.01359);">lifting.</div>
<div class="t" style="left: 532.7px; top: 596.97px; font-size: 12.5px; line-height: 12.5px; color: rgb(30, 30, 30); transform: scaleX(0.982728);"><b style="color:#C00000">Try It:</b> Hit Enter after the first paragraph in this doc to get a new line. Then, go to the</div>
<div class="t" style="left: 532.7px; top: 614.17px; font-size: 12.5px; line-height: 12.5px; color: rgb(30, 30, 30); transform: scaleX(0.957543);"><b style="color:#2B579A">References</b> tab, select <b style="color:#2B579A">Table of Contents</b>, and choose a TOC from the gallery.</div>
<div class="a" style="left:533px;top:637px;width:285px;height:204px;overflow:hidden;">
<div class="a" style="left:0px;top:0px;width:285px;height:204px;background:#F3F3F3;"></div>
<div class="a" style="left:0px;top:0px;width:285px;height:26.3px;background:#2B579A;"></div>
<div class="a" style="left:201px;top:5.2000000000000455px;width:48px;height:21.5px;background:#F3F3F3;"></div>
<div class="a" style="left:75.29999999999995px;top:8px;width:1px;height:16px;background:#4A70AD;"></div>
<div class="a" style="left:104.5px;top:8px;width:1px;height:16px;background:#4A70AD;"></div>
<div class="a" style="left:132px;top:8px;width:1px;height:16px;background:#4A70AD;"></div>
<div class="a" style="left:166px;top:8px;width:1px;height:16px;background:#4A70AD;"></div>
<div class="t" style="left: 15.4px; top: 11.72px; font-size: 9.5px; line-height: 9.5px; color: rgb(255, 255, 255); -webkit-text-stroke: 0.3px rgb(255, 255, 255); transform: scaleX(0.835918);">File</div>
<div class="t" style="left: 48px; top: 11.72px; font-size: 9.5px; line-height: 9.5px; color: rgb(255, 255, 255); -webkit-text-stroke: 0.3px rgb(255, 255, 255); transform: scaleX(0.907522);">Home</div>
<div class="t" style="left: 80px; top: 11.72px; font-size: 9.5px; line-height: 9.5px; color: rgb(255, 255, 255); -webkit-text-stroke: 0.3px rgb(255, 255, 255); transform: scaleX(0.858383);">Insert</div>
<div class="t" style="left: 108.7px; top: 11.72px; font-size: 9.5px; line-height: 9.5px; color: rgb(255, 255, 255); -webkit-text-stroke: 0.3px rgb(255, 255, 255); transform: scaleX(0.870472);">Draw</div>
<div class="t" style="left: 136.6px; top: 11.72px; font-size: 9.5px; line-height: 9.5px; color: rgb(255, 255, 255); -webkit-text-stroke: 0.3px rgb(255, 255, 255); transform: scaleX(0.858743);">Design</div>
<div class="t" style="left: 170.5px; top: 11.72px; font-size: 9.5px; line-height: 9.5px; color: rgb(255, 255, 255); -webkit-text-stroke: 0.3px rgb(255, 255, 255); transform: scaleX(0.893757);">Layout</div>
<div class="t" style="left: 253.5px; top: 11.72px; font-size: 9.5px; line-height: 9.5px; color: rgb(255, 255, 255); -webkit-text-stroke: 0.3px rgb(255, 255, 255); transform: scaleX(0.975347);">Mailings</div>
<div class="t" style="left: 205px; top: 11.72px; font-size: 9.5px; line-height: 9.5px; color: rgb(43, 87, 154); transform: scaleX(0.823151);">References</div>
<div class="a" style="left:4px;top:29px;width:42.8px;height:48.4px;background:#C8C8C8;"></div>
<svg class="a" style="left:17px;top:32px;" width="16" height="20" viewBox="0 0 16 20"><path d="M0.5 0.5 H11 L15 4.5 V19.5 H0.5 Z" fill="#fff" stroke="#777"></path><path d="M11 0.5 V4.5 H15" fill="none" stroke="#777"></path><rect x="2.5" y="3.5" width="7" height="1.3" fill="#2E74B5"></rect><rect x="2.5" y="7" width="6" height="1" fill="#2E74B5"></rect><rect x="10.5" y="7" width="2" height="1" fill="#2E74B5"></rect><rect x="3.5" y="10" width="5" height="1" fill="#2E74B5"></rect><rect x="10.5" y="10" width="2" height="1" fill="#2E74B5"></rect><rect x="3.5" y="13" width="5" height="1" fill="#2E74B5"></rect><rect x="10.5" y="13" width="2" height="1" fill="#2E74B5"></rect><rect x="2.5" y="16" width="6" height="1" fill="#2E74B5"></rect></svg>
<div class="t" style="left: 10px; top: 57.45px; font-size: 9px; line-height: 9px; color: rgb(51, 51, 51); transform: scaleX(0.941923);">Table of</div>
<div class="t" style="left: 6px; top: 68.85px; font-size: 9px; line-height: 9px; color: rgb(51, 51, 51); transform: scaleX(0.943625);">Contents</div>
<svg class="a" style="left:41.5px;top:72px;" width="4" height="3" viewBox="0 0 4 3"><path d="M0 0 H4 L2 2.5 Z" fill="#555"></path></svg>
<svg class="a" style="left:49px;top:31px;" width="11" height="12" viewBox="0 0 11 12"><path d="M2.5 2.5 H7.5 L10.5 5.5 V11.5 H2.5 Z" fill="#fff" stroke="#777" stroke-width="0.8"></path><path d="M0 2 H4 M2 0 V4" stroke="#2E9E6E" stroke-width="1.2"></path><rect x="4.5" y="6" width="4" height="3" fill="#9DC3E6"></rect></svg>
<div class="t" style="left: 62.7px; top: 33.25px; font-size: 9px; line-height: 9px; color: rgb(51, 51, 51); transform: scaleX(0.975347);">Add Text</div>
<svg class="a" style="left:97.5px;top:36.5px;" width="4" height="3" viewBox="0 0 4 3"><path d="M0 0 H4 L2 2.5 Z" fill="#555"></path></svg>
<svg class="a" style="left:49px;top:48.5px;" width="12" height="10" viewBox="0 0 12 10"><path d="M0.5 0.5 H5.5 L8 3 V9.5 H0.5 Z" fill="#fff" stroke="#777" stroke-width="0.8"></path><rect x="9.3" y="0.5" width="1.8" height="6" fill="#E03A2A"></rect><rect x="9.3" y="7.8" width="1.8" height="1.8" fill="#E03A2A"></rect></svg>
<div class="t" style="left: 62.7px; top: 49.85px; font-size: 9px; line-height: 9px; color: rgb(51, 51, 51); transform: scaleX(0.932388);">Update Table</div>
<div class="a" style="left:119.60000000000002px;top:31px;width:1px;height:46px;background:#DADADA;"></div>
<div class="t" style="left: 133px; top: 37.73px; font-size: 13.5px; line-height: 13.5px; color: rgb(85, 85, 85); transform: scaleX(0.860364);">AB</div>
<div class="t" style="left: 148.5px; top: 34.55px; font-size: 7px; line-height: 7px; color: rgb(224, 58, 42); font-weight: bold; transform: scaleX(0.896);">1</div>
<div class="t" style="left: 131.7px; top: 57.45px; font-size: 9px; line-height: 9px; color: rgb(51, 51, 51); transform: scaleX(0.901596);">Insert</div>
<div class="t" style="left: 124px; top: 68.85px; font-size: 9px; line-height: 9px; color: rgb(51, 51, 51); transform: scaleX(0.985048);">Footnote</div>
<svg class="a" style="left:163px;top:31px;" width="13" height="13" viewBox="0 0 13 13"><rect x="0.5" y="0.5" width="7" height="8" fill="#fff" stroke="#888" stroke-width="0.8"></rect><rect x="2.5" y="2.5" width="7" height="8" fill="#fff" stroke="#888" stroke-width="0.8"></rect><rect x="4.5" y="4.5" width="7.5" height="8" fill="#fff" stroke="#888" stroke-width="0.8"></rect><text x="6" y="11" font-size="6" fill="#2E74B5" font-family="Liberation Sans">[i]</text></svg>
<div class="t" style="left: 163px; top: 51.05px; font-size: 7px; line-height: 7px; color: rgb(85, 85, 85); transform: scaleX(0.856187);">AB</div>
<div class="t" style="left: 171px; top: 48.25px; font-size: 5px; line-height: 5px; color: rgb(224, 58, 42); font-weight: bold; transform: scaleX(0.898876);">1</div>
<svg class="a" style="left:167px;top:55px;" width="7" height="4" viewBox="0 0 7 4"><path d="M0 2 H6 M4 0 L6 2 L4 4" fill="none" stroke="#2E74B5" stroke-width="1"></path></svg>
<svg class="a" style="left:179px;top:58px;" width="4" height="3" viewBox="0 0 4 3"><path d="M0 0 H4 L2 2.5 Z" fill="#555"></path></svg>
<svg class="a" style="left:165px;top:64px;" width="8" height="10" viewBox="0 0 8 10"><rect x="0.5" y="0.5" width="7" height="9" fill="#eee" stroke="#C8C8C8" stroke-width="0.8"></rect><path d="M0.5 5 H7.5" stroke="#C8C8C8"></path></svg>
<div class="a" style="left:189px;top:31px;width:1px;height:46px;background:#DADADA;"></div>
<svg class="a" style="left:198px;top:32px;" width="20" height="20" viewBox="0 0 20 20"><circle cx="12" cy="7.5" r="6.3" fill="#fff" stroke="#2E74B5" stroke-width="1.5"></circle><path d="M7.5 12 L1.5 18" stroke="#2E74B5" stroke-width="2.4" stroke-linecap="round"></path><rect x="11.2" y="6" width="1.6" height="5" fill="#555"></rect><circle cx="12" cy="3.9" r="0.9" fill="#555"></circle></svg>
<div class="t" style="left: 196.6px; top: 57.45px; font-size: 9px; line-height: 9px; color: rgb(51, 51, 51); transform: scaleX(0.932726);">Smart</div>
<div class="t" style="left: 193.5px; top: 68.85px; font-size: 9px; line-height: 9px; color: rgb(51, 51, 51); transform: scaleX(0.965079);">Lookup</div>
<div class="a" style="left:227px;top:31px;width:1px;height:46px;background:#DADADA;"></div>
<svg class="a" style="left:240.70000000000005px;top:31.5px;" width="20" height="20" viewBox="0 0 20 20"><path d="M0.5 0.5 H10 L14 4.5 V19.5 H0.5 Z" fill="#fff" stroke="#888" stroke-width="0.8"></path><path d="M10 0.5 V4.5 H14" fill="none" stroke="#888" stroke-width="0.8"></path><text x="2" y="11.5" font-size="6" fill="#E03A2A" font-family="Liberation Sans">(--)</text><path d="M10 14 L13 17.5 L19.5 10" fill="none" stroke="#2E74B5" stroke-width="1.8"></path></svg>
<div class="t" style="left: 239.5px; top: 57.45px; font-size: 9px; line-height: 9px; color: rgb(51, 51, 51); transform: scaleX(0.932686);">Insert</div>
<div class="t" style="left: 231.8px; top: 68.85px; font-size: 9px; line-height: 9px; color: rgb(51, 51, 51); transform: scaleX(0.950333);">Citation</div>
<svg class="a" style="left:263.5px;top:72px;" width="4" height="3" viewBox="0 0 4 3"><path d="M0 0 H4 L2 2.5 Z" fill="#555"></path></svg>
<svg class="a" style="left:271px;top:31px;" width="13" height="45" viewBox="0 0 13 45"><rect x="0.5" y="2" width="11" height="8" fill="#fff" stroke="#777" stroke-width="0.8"></rect><rect x="0.5" y="18" width="11" height="10" fill="#fff" stroke="#2E74B5" stroke-width="0.8"></rect><rect x="5" y="23" width="7" height="6" fill="#fff" stroke="#777" stroke-width="0.8"></rect><rect x="0.5" y="36" width="8" height="8" fill="#F0D9A0" stroke="#B08D3A" stroke-width="0.8"></rect><rect x="5" y="39" width="7" height="6" fill="#fff" stroke="#777" stroke-width="0.8"></rect></svg>
<div class="a" style="left:0px;top:77.5px;width:285px;height:127px;background:#F3F3F3;"></div>
<div class="a" style="left:4px;top:78px;width:280px;height:127px;border:1px solid #C6C6C6;box-sizing:border-box;"></div>
<div class="a" style="left:5px;top:78.70000000000005px;width:278px;height:17px;background:#EDEDED;"></div>
<div class="t" style="left: 11.6px; top: 83.05px; font-size: 9px; line-height: 9px; color: rgb(122, 109, 96); transform: scaleX(1.04941);">Built-In</div>
<div class="a" style="left:5px;top:96.29999999999995px;width:277px;height:90px;background:#C6C6C6;"></div>
<div class="t" style="left: 7px; top: 98.55px; font-size: 9px; line-height: 9px; color: rgb(38, 38, 38); font-weight: bold; transform: scaleX(0.921163);">Automatic Table 1</div>
<div class="a" style="left:9px;top:113px;width:268px;height:68.8px;background:#FFFFFF;"></div>
<div class="t" style="left: 11px; top: 127.72px; font-size: 15.5px; line-height: 15.5px; color: rgb(64, 64, 64); -webkit-text-stroke: 0.3px rgb(255, 255, 255); transform: scaleX(0.892873);">Contents</div>
<div class="a" style="left:11px;top:143.89999999999998px;width:265.6px;height:1.6px;background:#3E6DB5;"></div>
<div class="t" style="left: 11px; top: 153.97px; font-size: 6.5px; line-height: 6.5px; color: rgb(38, 38, 38); font-weight: bold; transform: scaleX(0.901408);">Heading 1</div>
<svg class="a" style="left:40px;top:157.5px;" width="233" height="2" viewBox="0 0 233 2"><path d="M0 1 H233" stroke="#555" stroke-width="0.9" stroke-dasharray="1.3 0.7"></path></svg>
<div class="t" style="left: 272.6px; top: 153.97px; font-size: 6.5px; line-height: 6.5px; color: rgb(38, 38, 38); font-weight: bold; transform: scaleX(0.937931);">1</div>
<div class="t" style="left: 17.7px; top: 167.47px; font-size: 6.5px; line-height: 6.5px; color: rgb(38, 38, 38); font-weight: bold; transform: scaleX(0.901408);">Heading 2</div>
<svg class="a" style="left:46px;top:171.29999999999995px;" width="227" height="2" viewBox="0 0 227 2"><path d="M0 1 H227" stroke="#555" stroke-width="0.9" stroke-dasharray="1.3 0.7"></path></svg>
<div class="t" style="left: 24px; top: 178.97px; font-size: 6.5px; line-height: 6.5px; color: rgb(38, 38, 38); font-weight: bold; transform: scaleX(0.901408);">Heading 3</div>
<div class="a" style="left:9px;top:181.79999999999995px;width:268px;height:4.7px;background:#C6C6C6;"></div>
<div class="a" style="left:5px;top:186.5px;width:278px;height:18px;background:#FFFFFF;"></div>
<div class="t" style="left: 7px; top: 189.63px; font-size: 9.5px; line-height: 9.5px; color: rgb(80, 80, 80); font-weight: bold; transform: scaleX(0.872727);">Automatic Table 2</div>
<div class="a" style="left:124.39999999999998px;top:167.79999999999995px;width:153px;height:40px;background:#FFFFFF;border:1px solid #D0D0D0;box-sizing:border-box;"></div>
<div class="t" style="left: 133px; top: 173.85px; font-size: 9px; line-height: 9px; color: rgb(68, 68, 68); font-weight: bold; transform: scaleX(0.93027);">Automatic Table 1</div>
<div class="t" style="left: 133px; top: 188.65px; font-size: 9px; line-height: 9px; color: rgb(102, 102, 102); transform: scaleX(0.954215);">Automatic table contents (labeled</div>
<div class="t" style="left: 133px; top: 199.85px; font-size: 9px; line-height: 9px; color: rgb(102, 102, 102); transform: scaleX(0.916543);">“Contents”) that includes all text</div>
<div class="a" style="left:0px;top:0px;width:1.2px;height:204px;background:#2B579A;"></div>
<div class="a" style="left:283.5px;top:26px;width:1px;height:178px;background:#BDBDBD;"></div>
<svg class="a" style="left:117.5px;top:151.5px;" width="10" height="14" viewBox="0 0 10 14"><path d="M0.5 0.5 V11 L3 8.7 L5 13 L7 12 L5 7.8 H8.5 Z" fill="#fff" stroke="#222" stroke-width="0.9"></path></svg>
</div>
<div class="a" style="left:0px;top:841px;width:1600px;height:20px;background:#F3F3F3;"></div>
<div class="a" style="left:0px;top:841px;width:1600px;height:1.5px;background:#D6D6D6;"></div>
<div class="a" style="left:0px;top:859.7px;width:1600px;height:1.3px;background:#3A3A3A;"></div>
<div class="t" style="left: 7px; top: 846.22px; font-size: 9.5px; line-height: 9.5px; color: rgb(56, 56, 56); transform: scaleX(0.966892);">Page 1 of 7</div>
<div class="t" style="left: 70px; top: 846.22px; font-size: 9.5px; line-height: 9.5px; color: rgb(56, 56, 56); transform: scaleX(1.00678);">1193 words</div>
<svg class="a" style="left:135px;top:845px;" width="13" height="11" viewBox="0 0 13 11"><path d="M0.5 0.5 H4.5 Q6 0.5 6 2 V10.5 Q6 9.5 4.5 9.5 H0.5 Z" fill="none" stroke="#777" stroke-width="0.9"></path><path d="M6 2 Q6 0.5 7.5 0.5 H8 M6 10.5 Q6 9.5 7.5 9.5" fill="none" stroke="#777" stroke-width="0.9"></path><path d="M8.5 3 L12 7 M12 3 L8.5 7" stroke="#777" stroke-width="0.9"></path></svg>
<div class="t" style="left: 161.75px; top: 846.22px; font-size: 9.5px; line-height: 9.5px; color: rgb(56, 56, 56); transform: scaleX(0.990513);">English (United States)</div>
<div class="a" style="left:1393.3px;top:842.5px;width:31.5px;height:17.2px;background:#C6C6C6;"></div>
<svg class="a" style="left:1371px;top:845px;" width="12" height="11" viewBox="0 0 12 11"><path d="M0.5 1 L5.5 0.5 V10 L0.5 10.5 Z M11.5 1 L6.5 0.5 V10 L11.5 10.5 Z" fill="#fff" stroke="#777" stroke-width="0.9"></path><path d="M2 3 H4 M2 5 H4 M2 7 H4 M8 3 H10 M8 5 H10 M8 7 H10" stroke="#999" stroke-width="0.7"></path><path d="M6 0 V11" stroke="#777" stroke-width="1.2"></path></svg>
<svg class="a" style="left:1403px;top:845px;" width="12" height="11" viewBox="0 0 12 11"><rect x="0.5" y="0.5" width="11" height="10" fill="#E6E6E6" stroke="#777" stroke-width="0.9"></rect><path d="M2 3 H10 M2 5.2 H10 M2 7.4 H10" stroke="#888" stroke-width="1"></path></svg>
<svg class="a" style="left:1435px;top:845px;" width="12" height="12" viewBox="0 0 12 12"><path d="M0.5 0.5 H8 V5 M0.5 0.5 V10.5 H5" fill="none" stroke="#777" stroke-width="0.9"></path><path d="M2 3 H6 M2 5 H6" stroke="#999" stroke-width="0.8"></path><circle cx="8.7" cy="8.5" r="3.2" fill="#fff" stroke="#777" stroke-width="0.9"></circle><path d="M7 6.5 Q9 8 7.5 10.5 M9 5.5 Q10 8 11.5 9.5" fill="none" stroke="#777" stroke-width="0.7"></path></svg>
<div class="a" style="left:1461px;top:850.2px;width:5px;height:1.5px;background:#555;"></div>
<div class="a" style="left:1469.5px;top:851px;width:82.5px;height:1px;background:#A0A0A0;"></div>
<div class="a" style="left:1509px;top:846px;width:4px;height:9px;background:#6A6A6A;"></div>
<div class="a" style="left:1555px;top:850.2px;width:6.5px;height:1.5px;background:#555;"></div>
<div class="a" style="left:1557.5px;top:847.8px;width:1.5px;height:6.5px;background:#555;"></div>
<div class="t" style="left: 1571.5px; top: 846.22px; font-size: 9.5px; line-height: 9.5px; color: rgb(56, 56, 56); transform: scaleX(0.884319);">100%</div>

</body></html>
